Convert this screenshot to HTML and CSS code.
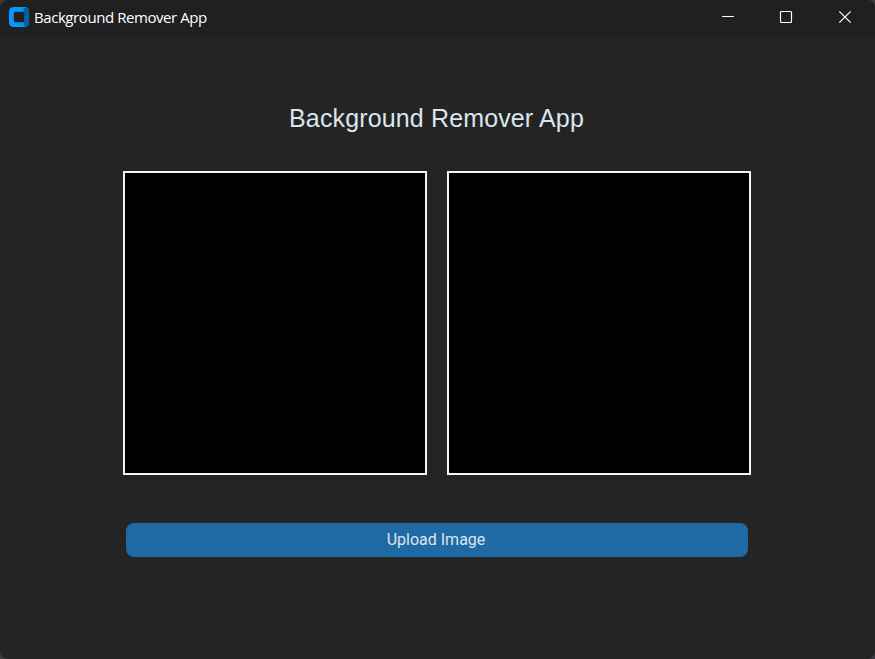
FILE: index.html
```html
<!DOCTYPE html>
<html lang="en">
<head>
<meta charset="utf-8">
<title>Background Remover App</title>
<link rel="stylesheet" href="styles.css">
</head>
<body>
<div class="window">
  <header class="titlebar">
    <svg class="logo" width="20" height="20" viewBox="0 0 20 20">
      <rect width="20" height="20" rx="4.5" fill="#0798ff"/>
      <path d="M14.500 1.500L17 .300A4.500 4.500 0 0 1 20 4.500v11a4.500 4.500 0 0 1-3 4.200l-2.500-1.200V15l.5-1.500v-7L14.500 5z" fill="#0560a8"/>
      <path d="M6 4.800h8l1.200 1.200v8L14 15.200H6L4.800 14V6z" fill="#202020"/>
    </svg>
    <span class="caption">Background Remover App</span>
    <div class="controls">
      <svg width="12" height="12" viewBox="0 0 12 12"><path d="M1 5.500h12" stroke-width="1"/></svg>
      <svg width="12" height="12" viewBox="0 0 12 12"><rect x=".5" y=".5" width="11" height="11" rx="1"/></svg>
      <svg width="12" height="12" viewBox="0 0 12 12"><path d="M.3.300l11.400 11.400M11.700.300L.3 11.700"/></svg>
    </div>
  </header>
  <main class="content">
    <h1 class="heading">Background Remover App</h1>
    <div class="previews">
      <div class="preview"></div>
      <div class="preview"></div>
    </div>
    <button class="upload">Upload Image</button>
  </main>
</div>
</body>
</html>
```
FILE: styles.css
```css
* { box-sizing: border-box; }
body { margin: 0; background: #3a3a42; }
.window {
  width: 875px;
  height: 659px;
  overflow: hidden;
  border-radius: 8px;
  background: #242424;
}
.titlebar {
  display: flex;
  height: 36px;
  padding: 7px 24px 0 9px;
  background: #202020;
}
.caption {
  margin-left: 5px;
  font: 15px/21px "Open Sans", sans-serif;
  letter-spacing: -0.43px;
  color: #fff;
  white-space: nowrap;
}
.controls {
  display: flex;
  gap: 47px;
  margin: 4px 0 0 auto;
}
.controls svg { fill: none; stroke: #fff; stroke-width: 1.2; overflow: visible; }
.content {
  display: flex;
  flex-direction: column;
  align-items: center;
  padding-top: 67px;
}
.heading {
  margin: 0 2px 0 0;
  font: 400 25px/31px "Liberation Sans", Arial, sans-serif;
  letter-spacing: 0.14px;
  color: #dce4ee;
  white-space: nowrap;
}
.previews {
  display: flex;
  gap: 20px;
  margin-top: 37px;
  margin-right: 1px;
}
.preview {
  width: 304px;
  height: 304px;
  border: 2px solid #f4f4f0;
  background: #000;
}
.upload {
  width: 622px;
  height: 34px;
  margin: 48px 1px 0 0;
  padding: 0 2px 0 0;
  border: 0;
  border-radius: 8px;
  background: #1f6aa5;
  color: #dce4ee;
  font: 16px/34px Roboto, sans-serif;
}
```
